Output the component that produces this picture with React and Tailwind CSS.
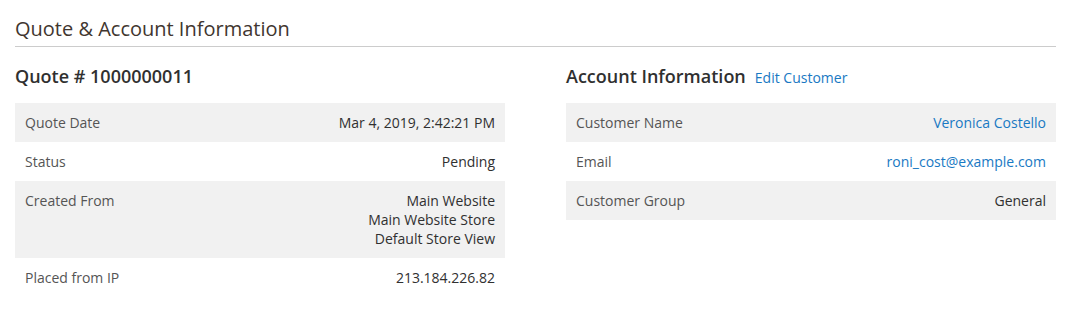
const quoteRows = [
  { label: 'Quote Date', value: ['Mar 4, 2019, 2:42:21 PM'] },
  { label: 'Status', value: ['Pending'] },
  { label: 'Created From', value: ['Main Website', 'Main Website Store', 'Default Store View'] },
  { label: 'Placed from IP', value: ['213.184.226.82'] },
];

const accountRows = [
  { label: 'Customer Name', value: ['Veronica Costello'], link: true },
  { label: 'Email', value: ['roni_cost@example.com'], link: true },
  { label: 'Customer Group', value: ['General'] },
];

const InfoTable = ({ rows }) => (
  <table className="w-full border-collapse text-[14px] leading-[19px]">
    <tbody>
      {rows.map((row, i) => (
        <tr key={row.label} className={i % 2 === 0 ? 'bg-[#f1f1f1]' : 'bg-white'}>
          <th className="px-[10px] py-[10px] text-left align-top font-normal text-[#555]">{row.label}</th>
          <td className={`px-[10px] py-[10px] text-right align-top ${row.link ? 'text-[#1979c3]' : 'text-[#303030]'}`}>
            {row.value.map((line) => (
              <div key={line}>{line}</div>
            ))}
          </td>
        </tr>
      ))}
    </tbody>
  </table>
);

export default function App() {
  return (
    <div className="w-[1070px] h-[326px] bg-white pl-[15px] pr-[14px] font-['Open_Sans',sans-serif]">
      <div className="pt-[17px] pb-[5px] border-b border-[#cccccc]">
        <h2 className="text-[20px] leading-[24px] font-normal text-[#41362f]">Quote &amp; Account Information</h2>
      </div>

      <div className="grid grid-cols-2 gap-x-[61px] pt-[18px]">
        <section>
          <h3 className="mb-[16px] h-[22px] text-[18px] leading-[22px] font-semibold text-[#303030]">Quote # 1000000011</h3>
          <InfoTable rows={quoteRows} />
        </section>

        <section>
          <div className="mb-[16px] flex h-[22px] items-baseline gap-[9px]">
            <h3 className="text-[18px] leading-[22px] font-semibold text-[#303030]">Account Information</h3>
            <a className="text-[14px] leading-[22px] text-[#1979c3]" href="#">Edit Customer</a>
          </div>
          <InfoTable rows={accountRows} />
        </section>
      </div>
    </div>
  );
}
